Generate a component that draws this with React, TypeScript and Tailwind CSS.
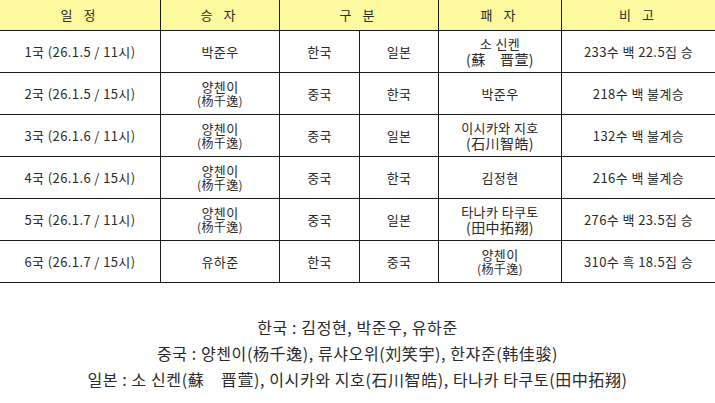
import * as React from "react";

type Row = {
  game: string;
  winner: [string, string?];
  winnerSide: string;
  loserSide: string;
  loser: [string, string?];
  loserBig?: boolean;
  note: string;
};

const rows: Row[] = [
  { game: "1국 (26.1.5 / 11시)", winner: ["박준우"], winnerSide: "한국", loserSide: "일본", loser: ["소 신켄", "(蘇　晋萱)"], loserBig: true, note: "233수 백 22.5집 승" },
  { game: "2국 (26.1.5 / 15시)", winner: ["양첸이", "(杨千逸)"], winnerSide: "중국", loserSide: "한국", loser: ["박준우"], note: "218수 백 불계승" },
  { game: "3국 (26.1.6 / 11시)", winner: ["양첸이", "(杨千逸)"], winnerSide: "중국", loserSide: "일본", loser: ["이시카와 지호", "(石川智皓)"], loserBig: true, note: "132수 백 불계승" },
  { game: "4국 (26.1.6 / 15시)", winner: ["양첸이", "(杨千逸)"], winnerSide: "중국", loserSide: "한국", loser: ["김정현"], note: "216수 백 불계승" },
  { game: "5국 (26.1.7 / 11시)", winner: ["양첸이", "(杨千逸)"], winnerSide: "중국", loserSide: "일본", loser: ["타나카 타쿠토", "(田中拓翔)"], loserBig: true, note: "276수 백 23.5집 승" },
  { game: "6국 (26.1.7 / 15시)", winner: ["유하준"], winnerSide: "한국", loserSide: "중국", loser: ["양첸이", "(杨千逸)"], note: "310수 흑 18.5집 승" },
];

function Name({ lines, big }: { lines: [string, string?]; big?: boolean }) {
  if (!lines[1]) return <span>{lines[0]}</span>;
  return (
    <div className="flex flex-col items-center">
      <span className="h-[14px] leading-[14px]">{lines[0]}</span>
      <span className={big ? "h-[16px] text-[14px] leading-[16px]" : "h-[14px] text-[12px] leading-[14px]"}>
        {lines[1]}
      </span>
    </div>
  );
}

export default function App() {
  const cell = "flex items-center justify-center border-b border-[#1a1a1a]";
  const head = `${cell} h-[31px] bg-[#fdf99f] tracking-[4px]`;
  return (
    <div
      className="w-[715px] h-[403px] overflow-hidden bg-white text-[#2a2a2a] text-[13px] tracking-[0.4px]"
      style={{ fontFamily: '"Noto Sans CJK KR", "Noto Sans", sans-serif' }}
    >
      <div className="grid grid-cols-[160px_119px_80px_79px_123px_1fr]">
        <div className={head}>일 정</div>
        <div className={`${head} border-l`}>승 자</div>
        <div className={`${head} col-span-2 border-l`}>구 분</div>
        <div className={`${head} border-l`}>패 자</div>
        <div className={`${head} border-l`}>비 고</div>

        {rows.map((r) => (
          <React.Fragment key={r.game}>
            <div className={`${cell} h-[42px]`}>{r.game}</div>
            <div className={`${cell} h-[42px] border-l`}>
              <Name lines={r.winner} />
            </div>
            <div className={`${cell} h-[42px] border-l`}>{r.winnerSide}</div>
            <div className={`${cell} h-[42px] border-l`}>{r.loserSide}</div>
            <div className={`${cell} h-[42px] border-l`}>
              <Name lines={r.loser} big={r.loserBig} />
            </div>
            <div className={`${cell} h-[42px] border-l`}>{r.note}</div>
          </React.Fragment>
        ))}
      </div>

      <div className="mt-[31px] flex flex-col items-center text-[16px] leading-[26px] tracking-[0.6px]">
        <p>한국 : 김정현, 박준우, 유하준</p>
        <p>중국 : 양첸이(杨千逸), 류샤오위(刘笑宇), 한쟈준(韩佳骏)</p>
        <p>일본 : 소 신켄(蘇　晋萱), 이시카와 지호(石川智皓), 타나카 타쿠토(田中拓翔)</p>
      </div>
    </div>
  );
}
